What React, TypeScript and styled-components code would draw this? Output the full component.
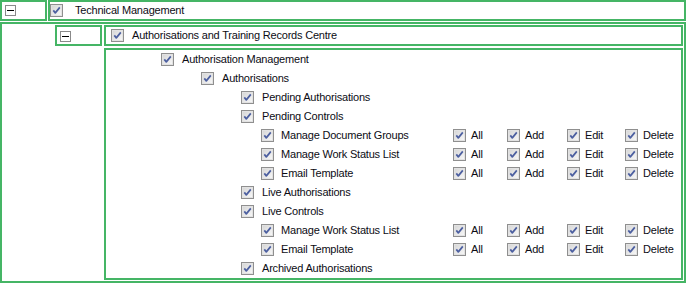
import React from "react";
import styled, { createGlobalStyle } from "styled-components";

const GREEN = "#45b565";

const Global = createGlobalStyle`
  html, body { margin: 0; padding: 0; background: #fff; }
  body { font-family: "Liberation Sans", Arial, sans-serif; font-size: 11px; letter-spacing: -0.2px; color: #0c0c14; }
`;

const Page = styled.div`
  width: 686px;
  height: 283px;
  display: flex;
  flex-direction: column;
  gap: 1px;
  box-sizing: border-box;
`;

const TopRow = styled.div`
  display: flex;
  gap: 1px;
  height: 21px;
`;

const ToggleCell = styled.div<{ $padTop: number }>`
  box-sizing: border-box;
  width: 47px;
  height: 21px;
  border: 2px solid ${GREEN};
  padding: ${(p) => p.$padTop}px 0 0 3px;
  flex: none;
`;

const HeaderBox = styled.div<{ $padLeft: number; $gap: number }>`
  box-sizing: border-box;
  flex: 1;
  height: 21px;
  border: 2px solid ${GREEN};
  display: flex;
  align-items: center;
  padding-left: ${(p) => p.$padLeft}px;
  gap: ${(p) => p.$gap}px;
  white-space: nowrap;
`;

const Outer = styled.div`
  box-sizing: border-box;
  flex: 1;
  border: 2px solid ${GREEN};
  padding: 1px 1px 1px 53px;
  display: flex;
  flex-direction: column;
  gap: 2px;
`;

const SubRow = styled.div`
  display: flex;
  gap: 2px;
`;

const Content = styled.div`
  box-sizing: border-box;
  margin-left: 49px;
  border: 2px solid ${GREEN};
  display: flex;
  flex-direction: column;
`;

const Row = styled.div<{ $indent: number }>`
  height: 19px;
  display: flex;
  align-items: center;
  gap: 8px;
  padding-left: ${(p) => p.$indent}px;
  white-space: nowrap;
`;

const PermRow = styled.div`
  height: 19px;
  display: grid;
  grid-template-columns: 347px 54px 60px 58px 1fr;
  align-items: center;
  white-space: nowrap;
`;

const Cell = styled.div<{ $indent?: number; $gap?: number }>`
  display: flex;
  align-items: center;
  gap: ${(p) => p.$gap ?? 5}px;
  padding-left: ${(p) => p.$indent ?? 0}px;
`;

const Label = styled.span`
  line-height: 19px;
`;

const Check = () => (
  <svg width="13" height="13" viewBox="0 0 13 13" style={{ flex: "none", display: "block" }}>
    <defs>
      <linearGradient id="cbg" x1="0" y1="0" x2="1" y2="1">
        <stop offset="0" stopColor="#d6d6d6" />
        <stop offset="1" stopColor="#f8f8f8" />
      </linearGradient>
    </defs>
    <rect x="0.5" y="0.5" width="12" height="12" fill="#fff" stroke="#8f8f8f" />
    <rect x="1.5" y="1.5" width="10" height="10" fill="url(#cbg)" stroke="#e2e2e2" />
    <path d="M3.3 6.4 L5.3 8.9 L9.8 3.4" fill="none" stroke="#4c5fa0" strokeWidth="1.7" strokeLinejoin="round" />
  </svg>
);

const Minus = () => (
  <svg width="11" height="11" viewBox="0 0 11 11" style={{ display: "block" }}>
    <rect x="0.5" y="0.5" width="10" height="10" fill="#fff" stroke="#8a8a8a" />
    <line x1="2" y1="5.5" x2="9" y2="5.5" stroke="#000" strokeWidth="1" />
  </svg>
);

type Item = { label: string; level: number; perms?: boolean };

const INDENT: Record<number, number> = { 1: 55, 2: 95, 3: 135, 4: 155 };

const items: Item[] = [
  { label: "Authorisation Management", level: 1 },
  { label: "Authorisations", level: 2 },
  { label: "Pending Authorisations", level: 3 },
  { label: "Pending Controls", level: 3 },
  { label: "Manage Document Groups", level: 4, perms: true },
  { label: "Manage Work Status List", level: 4, perms: true },
  { label: "Email Template", level: 4, perms: true },
  { label: "Live Authorisations", level: 3 },
  { label: "Live Controls", level: 3 },
  { label: "Manage Work Status List", level: 4, perms: true },
  { label: "Email Template", level: 4, perms: true },
  { label: "Archived Authorisations", level: 3 },
];

const PERMS = ["All", "Add", "Edit", "Delete"];

export default function App() {
  return (
    <>
      <Global />
      <Page>
        <TopRow>
          <ToggleCell $padTop={3}>
            <Minus />
          </ToggleCell>
          <HeaderBox $padLeft={0} $gap={12}>
            <Check />
            <Label>Technical Management</Label>
          </HeaderBox>
        </TopRow>
        <Outer>
          <SubRow>
            <ToggleCell $padTop={4}>
              <Minus />
            </ToggleCell>
            <HeaderBox $padLeft={5} $gap={8}>
              <Check />
              <Label>Authorisations and Training Records Centre</Label>
            </HeaderBox>
          </SubRow>
          <Content>
            {items.map((it, i) =>
              it.perms ? (
                <PermRow key={i}>
                  <Cell $indent={INDENT[it.level]} $gap={7}>
                    <Check />
                    <Label>{it.label}</Label>
                  </Cell>
                  {PERMS.map((p) => (
                    <Cell key={p}>
                      <Check />
                      <Label>{p}</Label>
                    </Cell>
                  ))}
                </PermRow>
              ) : (
                <Row key={i} $indent={INDENT[it.level]}>
                  <Check />
                  <Label>{it.label}</Label>
                </Row>
              )
            )}
          </Content>
        </Outer>
      </Page>
    </>
  );
}
